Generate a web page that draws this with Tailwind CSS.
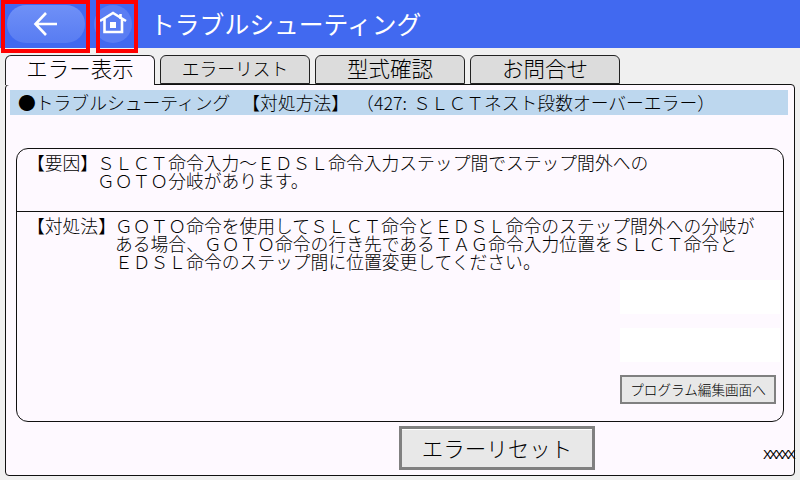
<!DOCTYPE html>
<html lang="ja">
<head>
  <meta charset="UTF-8" />
  <title>トラブルシューティング</title>
  <script src="https://cdn.jsdelivr.net/npm/@tailwindcss/browser@4"></script>
</head>
<body class="relative w-[800px] h-[480px] overflow-hidden bg-[#f0f0f0] text-black font-light font-['Noto_Sans_CJK_JP',sans-serif]">

  <!-- Header -->
  <header class="flex items-center h-[48px] bg-[#4169f0] text-white">
    <button class="flex items-center justify-center w-[78px] h-[38px] ml-[7px] rounded-full bg-gradient-to-b from-[#6f90f7] to-[#587cf2]">
      <svg width="26" height="26" viewBox="0 0 26 26" fill="none" stroke="white" stroke-width="2.6">
        <path d="M24 13H3M13 2L2.5 13L13 24" />
      </svg>
    </button>
    <button class="flex items-center justify-center w-[38px] h-[38px] ml-[9px] rounded-full bg-[#5a7df3]">
      <svg width="28" height="26" viewBox="0 0 28 26" fill="none" stroke="white" stroke-width="2.6">
        <path d="M1 10L14 2L27 10M5.5 8V21H23V8M21.5 3V8" />
        <rect x="11" y="11" width="6" height="6" fill="white" stroke="none" />
      </svg>
    </button>
    <h1 class="ml-[18px] -mt-[2px] text-[24.8px] leading-none font-normal">トラブルシューティング</h1>
  </header>

  <!-- Tabs -->
  <nav class="flex gap-[5px] pl-[5px] mt-[7px] h-[30px] relative z-10">
    <div class="w-[150px] h-[30px] border border-b-0 border-[#222] rounded-t-[6px] bg-[#fef9ff] text-[21.5px] leading-[24px] text-center">エラー表示</div>
    <div class="w-[150px] h-[29px] border border-[#222] rounded-t-[6px] bg-[#dcdcdc] text-[17.8px] leading-[24px] text-center">エラーリスト</div>
    <div class="w-[150px] h-[29px] border border-[#222] rounded-t-[6px] bg-[#dcdcdc] text-[21.5px] leading-[24px] text-center">型式確認</div>
    <div class="w-[150px] h-[29px] border border-[#222] rounded-t-[6px] bg-[#dcdcdc] text-[21.5px] leading-[24px] text-center">お問合せ</div>
  </nav>

  <!-- Panel -->
  <main class="w-[790px] h-[392px] ml-[5px] -mt-px border border-[#111] rounded-[4px] bg-[#fef9ff] pt-[5px] pl-[4px]">
    <div class="w-[778px] h-[25px] bg-[#bdd7ee] text-[17.8px] leading-[24px] whitespace-pre pl-[8px]">●トラブルシューティング<span class="ml-[12px]">【対処方法】</span><span class="ml-[16px]">（427:</span><span class="ml-[6px]">ＳＬＣＴネスト段数オーバーエラー）</span></div>

    <section class="w-[768px] h-[274px] mt-[33px] ml-[6px] border border-[#111] rounded-[12px] text-[17.8px] leading-[18px]">
      <div class="flex h-[63px] border-b border-[#111] pt-[4px] pl-[10px]">
        <span class="w-[70px] shrink-0">【要因】</span>
        <p class="whitespace-nowrap">ＳＬＣＴ命令入力～ＥＤＳＬ命令入力ステップ間でステップ間外への<br />ＧＯＴＯ分岐があります。</p>
      </div>
      <div class="flex h-[208px] pt-[4px] pl-[10px] relative">
        <span class="w-[88px] shrink-0">【対処法】</span>
        <p class="whitespace-nowrap">ＧＯＴＯ命令を使用してＳＬＣＴ命令とＥＤＳＬ命令のステップ間外への分岐が<br />ある場合、ＧＯＴＯ命令の行き先であるＴＡＧ命令入力位置をＳＬＣＴ命令と<br />ＥＤＳＬ命令のステップ間に位置変更してください。</p>
        <div class="absolute left-[603px] top-[68px] flex flex-col items-start">
          <div class="w-[160px] h-[34px] bg-white"></div>
          <div class="w-[160px] h-[34px] mt-[14px] bg-white"></div>
          <button class="w-[156px] h-[29px] mt-[13px] border-2 border-[#808080] bg-[#e8e8e8] text-[13.6px] leading-[21px] text-center">プログラム編集画面へ</button>
        </div>
      </div>
    </section>

    <div class="flex items-end mt-[4px]">
      <button class="w-[196px] h-[44px] ml-[389px] border-[3px] border-[#808080] bg-[#e8e8e8] shadow-[inset_0_1px_0_white] text-[21.5px] leading-[34px] text-center">エラーリセット</button>
      <span class="ml-[168px] mb-[8px] text-[13px] leading-[14px] tracking-[-2.7px] font-['Liberation_Sans',sans-serif]">XXXXX</span>
    </div>
  </main>

  <!-- Red highlight frames -->
  <div class="absolute left-[1px] top-0 w-[89px] h-[53px] border-[4px] border-[#f00]"></div>
  <div class="absolute left-[96px] top-0 w-[42px] h-[53px] border-[4px] border-[#f00]"></div>

</body>
</html>
